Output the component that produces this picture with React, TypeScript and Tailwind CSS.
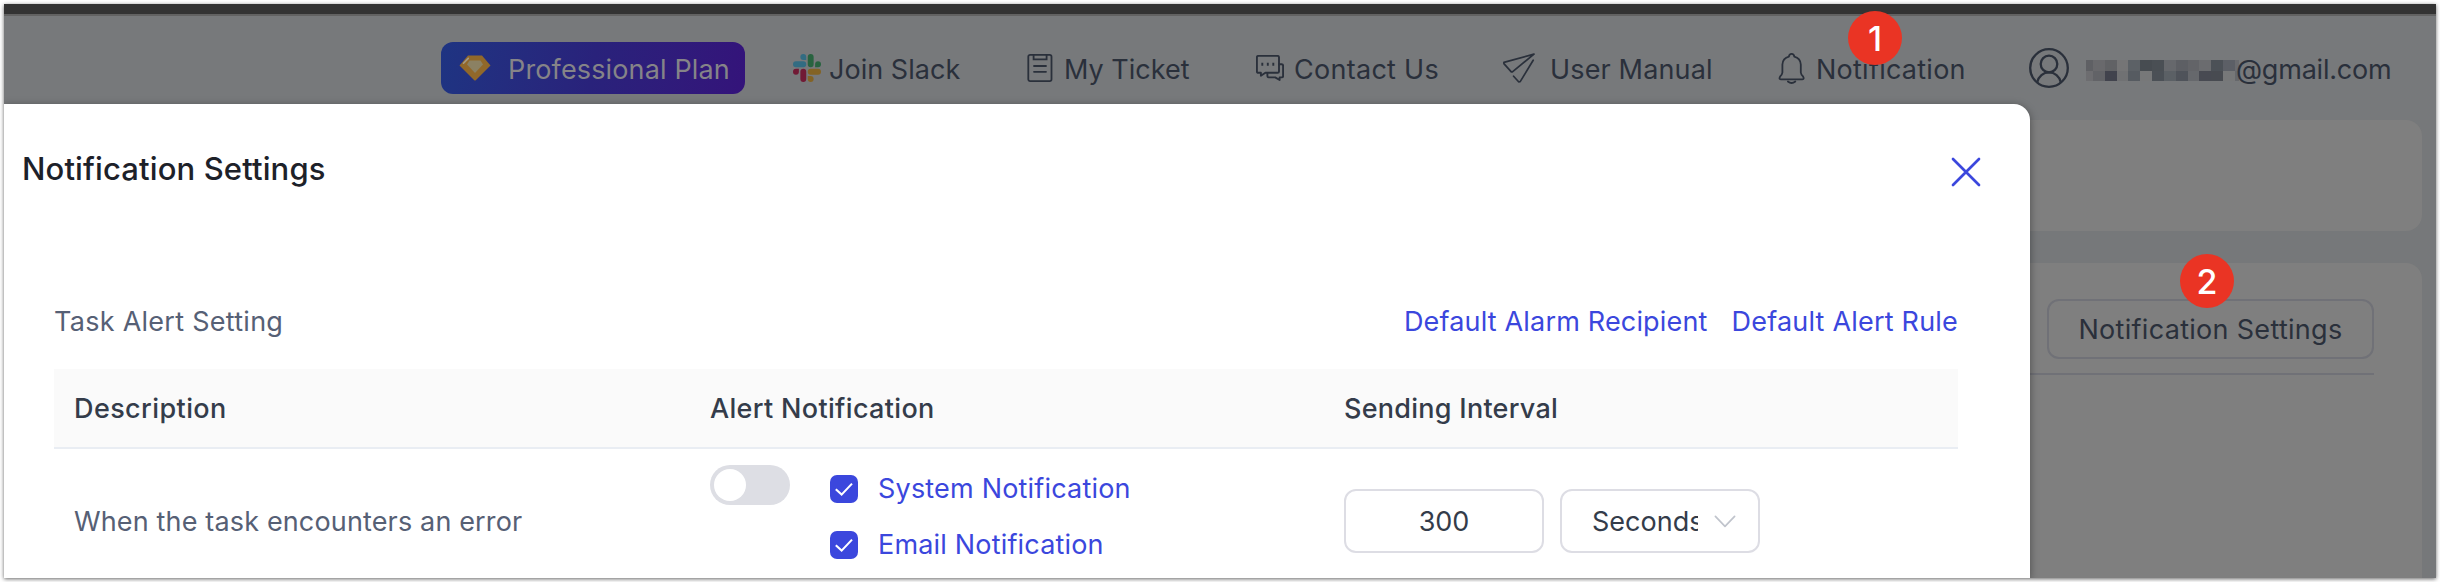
import type { ReactNode } from "react";

const MOSAIC_TOP = ["#5f6064", "#69696c", "#616265", "#757576", "#5c6166", "#474c51", "#4a4f54", "#66686c", "#5d5f64", "#636468", "#6b6c6f", "#4c5157", "#5c5f66", "#6a6b6f"];
const MOSAIC_BOTTOM = ["#6d6d70", "#626367", "#41434d", "#707173", "#565b61", "#777879", "#4b5056", "#5b6065", "#4f535a", "#66686c", "#484a52", "#484b51", "#777879", "#66686c"];

function GemIcon() {
  return (
    <svg className="h-[26px] w-8 shrink-0" viewBox="0 0 32 26">
      <path d="M9 0.5H23L31.5 10.5L16.5 25.5H15.5L0.5 10.5Z" fill="#91682a" />
      <path d="M10.5 5.5H21.5L24 9.5L16 18L8 9.5Z" fill="#8b8163" />
      <path d="M4.5 8.2L9.3 3.4" stroke="#a39a86" strokeWidth="1.6" strokeLinecap="round" />
    </svg>
  );
}

function SlackIcon() {
  return (
    <svg className="h-7 w-7 shrink-0" viewBox="0 0 24 24" preserveAspectRatio="none">
      <path fill="#711a35" d="M5.042 15.165a2.528 2.528 0 0 1-2.52 2.523A2.528 2.528 0 0 1 0 15.165a2.527 2.527 0 0 1 2.522-2.52h2.52v2.52zM6.313 15.165a2.527 2.527 0 0 1 2.521-2.52 2.527 2.527 0 0 1 2.521 2.52v6.313A2.528 2.528 0 0 1 8.834 24a2.528 2.528 0 0 1-2.521-2.522v-6.313z" />
      <path fill="#326c82" d="M8.834 5.042a2.528 2.528 0 0 1-2.521-2.52A2.528 2.528 0 0 1 8.834 0a2.528 2.528 0 0 1 2.521 2.522v2.52H8.834zM8.834 6.313a2.528 2.528 0 0 1 2.521 2.521 2.528 2.528 0 0 1-2.521 2.521H2.522A2.528 2.528 0 0 1 0 8.834a2.528 2.528 0 0 1 2.522-2.521h6.312z" />
      <path fill="#28633f" d="M18.956 8.834a2.528 2.528 0 0 1 2.522-2.521A2.528 2.528 0 0 1 24 8.834a2.528 2.528 0 0 1-2.522 2.521h-2.522V8.834zM17.688 8.834a2.528 2.528 0 0 1-2.523 2.521 2.527 2.527 0 0 1-2.52-2.521V2.522A2.527 2.527 0 0 1 15.165 0a2.528 2.528 0 0 1 2.523 2.522v6.312z" />
      <path fill="#836325" d="M15.165 18.956a2.528 2.528 0 0 1 2.523 2.522A2.528 2.528 0 0 1 15.165 24a2.527 2.527 0 0 1-2.52-2.522v-2.522h2.52zM15.165 17.688a2.527 2.527 0 0 1-2.52-2.523 2.526 2.526 0 0 1 2.52-2.52h6.313A2.527 2.527 0 0 1 24 15.165a2.528 2.528 0 0 1-2.522 2.523h-6.313z" />
    </svg>
  );
}

function TicketIcon() {
  return (
    <svg className="h-7 w-[26px] shrink-0" viewBox="0 0 26 28" fill="none" stroke="currentColor" strokeWidth="1.8" strokeLinecap="round">
      <rect x="1.3" y="0.9" width="23.2" height="26.2" rx="1.8" />
      <path d="M6.6 1.5V5.4H19.6V1.5M7 12H19M7 17.8H19" />
    </svg>
  );
}

function ContactIcon() {
  return (
    <svg className="h-[26px] w-7 shrink-0" viewBox="0 0 28 26" fill="none" stroke="currentColor" strokeWidth="1.9" strokeLinejoin="round" strokeLinecap="round">
      <path d="M2.4 0.9H21.6Q23 0.9 23 2.3V16.4Q23 17.8 21.6 17.8H9.4L4.9 20.8V17.8H2.4Q0.9 17.8 0.9 16.4V2.3Q0.9 0.9 2.4 0.9Z" />
      <path d="M23 9.3H25.7Q27.1 9.3 27.1 10.7V21Q27.1 22.4 25.7 22.4H23.6V25L19.2 22.4H12.6Q11.4 22.4 11.4 20.6V18.4" />
      <path d="M6.3 7.8V10.8M11.8 7.8V10.8M17.3 7.8V10.8" strokeLinecap="butt" />
    </svg>
  );
}

function PlaneIcon() {
  return (
    <svg className="h-[30px] w-8 shrink-0" viewBox="0 0 32 30" fill="none" stroke="currentColor" strokeWidth="1.7" strokeLinejoin="round" strokeLinecap="round">
      <path d="M31 1.1L0.9 9.4V10.6L8.3 18.9H9.4L31 1.1" />
      <path d="M30.2 7.2L17.2 28.6L15.6 28.8L10.6 23.2" />
    </svg>
  );
}

function BellIcon() {
  return (
    <svg className="h-[31px] w-[27px] shrink-0" viewBox="0 0 27 31" fill="none" stroke="currentColor" strokeWidth="1.8" strokeLinejoin="round" strokeLinecap="round">
      <path d="M10.9 3.6Q11.2 0.9 13.6 0.9Q16 0.9 16.3 3.6C20.4 4.6 22.6 7.8 22.8 11.5V19.5Q23 21.4 25 23.4Q26.6 26.4 24.4 26.4H2.8Q0.6 26.4 2.2 23.4Q4.2 21.4 4.4 19.5V11.5C4.6 7.8 6.8 4.6 10.9 3.6Z" />
      <path d="M9.9 28.5Q13.6 31.6 17.3 28.5" />
    </svg>
  );
}

function UserIcon() {
  return (
    <svg className="h-10 w-10 shrink-0" viewBox="0 0 40 40" fill="none" stroke="currentColor" strokeWidth="2.3" strokeLinecap="round">
      <circle cx="20" cy="20" r="18.8" />
      <circle cx="20" cy="16" r="8.3" />
      <path d="M8.2 34.2C9.6 28.4 14.2 24.4 20 24.4S30.4 28.4 31.8 34.2" />
    </svg>
  );
}

function NavItem({ icon, label, className }: { icon: ReactNode; label: string; className: string }) {
  return (
    <a className={`flex shrink-0 items-center ${className}`}>
      {icon}
      <span className="mt-[2px]">{label}</span>
    </a>
  );
}

function Badge({ children, className }: { children: ReactNode; className: string }) {
  return (
    <span className={`absolute flex h-[54px] w-[54px] items-center justify-center rounded-full bg-[#ea3424] text-[34px] font-medium text-white ${className}`}>
      {children}
    </span>
  );
}

function Checkbox({ label, className }: { label: string; className: string }) {
  return (
    <label className={`flex h-14 items-center gap-5 text-[#3b47dd] ${className}`}>
      <span className="flex h-7 w-7 items-center justify-center rounded-[7px] bg-[#3b47dd]">
        <svg className="h-7 w-7" viewBox="0 0 28 28" fill="none" stroke="#fff" strokeWidth="2.1">
          <path d="M5.8 14.3L11.6 19.6L22 8.6" />
        </svg>
      </span>
      <span className="-mt-[2px]">{label}</span>
    </label>
  );
}

export default function App() {
  return (
    <div className="h-[582px] w-[2440px] overflow-hidden bg-white p-1 font-['Inter',sans-serif] text-[27px] leading-[33px] whitespace-nowrap">
      <div className="relative h-[574px] w-[2432px] bg-[#76787a] shadow-[0_1px_4px_rgba(0,0,0,0.6)]">
        <div className="flex h-full flex-col overflow-hidden text-[#2a303b]">
          <div className="h-3 shrink-0 border-b-2 border-[#626262] bg-[#333333]" />
          <header className="flex h-[104px] shrink-0 items-center bg-[#77797b] pl-[437px]">
            <button className="mr-12 flex h-[52px] w-[304px] shrink-0 items-center gap-[17px] rounded-xl bg-linear-100 from-[#1e3482] via-[#29227b] to-[#34137a] pl-[18px] tracking-[0.14px] text-[#858488]">
              <GemIcon />
              <span className="mt-[2px]">Professional Plan</span>
            </button>
            <NavItem icon={<SlackIcon />} label="Join Slack" className="w-[234px] gap-2 tracking-[0.03px]" />
            <NavItem icon={<TicketIcon />} label="My Ticket" className="w-[229px] gap-[11px]" />
            <NavItem icon={<ContactIcon />} label="Contact Us" className="w-[247px] gap-[10px] tracking-[0.28px]" />
            <NavItem icon={<PlaneIcon />} label="User Manual" className="w-[275px] gap-[15px] tracking-[0.15px]" />
            <NavItem icon={<BellIcon />} label="Notification" className="w-[251px] gap-[11px] tracking-[0.25px]" />
            <div className="flex shrink-0 items-center">
              <UserIcon />
              <div className="mt-[5px] ml-[17px] grid h-[21px] w-[153px] grid-cols-[7px_repeat(12,1fr)_4px]">
                {[...MOSAIC_TOP, ...MOSAIC_BOTTOM].map((color, i) => (
                  <span key={i} style={{ backgroundColor: color }} />
                ))}
              </div>
              <span className="-ml-[3px] mt-[2px] tracking-[-0.21px]">@gmail.com</span>
            </div>
          </header>
          <main className="flex grow flex-col gap-8 pr-[14px]">
            <section className="h-[111px] shrink-0 rounded-r-2xl bg-[#7f7f7f]" />
            <section className="grow rounded-tr-2xl bg-[#7f7f7f] pt-9 pr-12">
              <div className="flex h-[76px] items-start justify-end border-b-2 border-[#707177]">
                <button className="flex h-[60px] w-[327px] items-center justify-center rounded-xl border-2 border-[#707177] tracking-[0.3px]">
                  Notification Settings
                </button>
              </div>
            </section>
          </main>
        </div>

        <div className="absolute inset-0 overflow-hidden">
          <div role="dialog" className="mt-[100px] h-[474px] w-[2026px] rounded-tr-2xl bg-white text-[#566075] shadow-[0_2px_8px_rgba(0,0,0,0.4)]">
            <div className="flex h-[136px] items-center justify-between pr-12 pl-[18px]">
              <h2 className="mb-[6px] text-[31px] leading-[38px] font-medium tracking-[0.13px] text-[#1d2129]">Notification Settings</h2>
              <svg className="h-8 w-8" viewBox="0 0 32 32" fill="none" stroke="#3b47dd" strokeWidth="2.7" strokeLinecap="round">
                <path d="M3 3L29 29M29 3L3 29" />
              </svg>
            </div>
            <div className="mx-[50px] mr-[72px]">
              <div className="flex h-[129px] items-center justify-between pt-[33px]">
                <span className="tracking-[0.27px]">Task Alert Setting</span>
                <div className="flex gap-6 text-[#3b47dd]">
                  <a className="tracking-[0.17px]">Default Alarm Recipient</a>
                  <a className="tracking-[0.2px]">Default Alert Rule</a>
                </div>
              </div>
              <div className="grid h-20 grid-cols-[636px_634px_1fr] items-center border-b-2 border-[#e9edf3] bg-[#fafafa] font-medium text-[#343c4a]">
                <span className="pl-5 tracking-[0.4px]">Description</span>
                <span className="pl-5 tracking-[0.33px]">Alert Notification</span>
                <span className="pl-5 tracking-[0.26px]">Sending Interval</span>
              </div>
              <div className="grid h-36 grid-cols-[636px_634px_1fr]">
                <span className="self-center pl-5 tracking-[0.15px]">When the task encounters an error</span>
                <div className="flex gap-10 pt-3 pl-5">
                  <span className="mt-1 flex h-10 w-20 items-center rounded-full bg-[#dddee4] pl-1">
                    <span className="h-8 w-8 rounded-full bg-white" />
                  </span>
                  <div className="flex flex-col">
                    <Checkbox label="System Notification" className="tracking-[0.19px]" />
                    <Checkbox label="Email Notification" className="tracking-[0.18px]" />
                  </div>
                </div>
                <div className="flex items-center gap-4 pl-5 text-[#343c4a]">
                  <span className="flex h-16 w-[200px] items-center justify-center rounded-xl border-2 border-[#dddde4]">300</span>
                  <span className="flex h-16 w-[200px] items-center rounded-xl border-2 border-[#dddde4] pl-[30px]">
                    <span className="w-[106px] overflow-hidden">Seconds</span>
                    <svg className="ml-4 h-[13px] w-[22px]" viewBox="0 0 22 13" fill="none" stroke="#c0c4cc" strokeWidth="1.7" strokeLinecap="round" strokeLinejoin="round">
                      <path d="M1.4 1.4L11 11.4L20.6 1.4" />
                    </svg>
                  </span>
                </div>
              </div>
            </div>
          </div>
        </div>

        <Badge className="top-[7px] left-[1844px]">1</Badge>
        <Badge className="top-[250px] left-[2176px]">2</Badge>
      </div>
    </div>
  );
}
